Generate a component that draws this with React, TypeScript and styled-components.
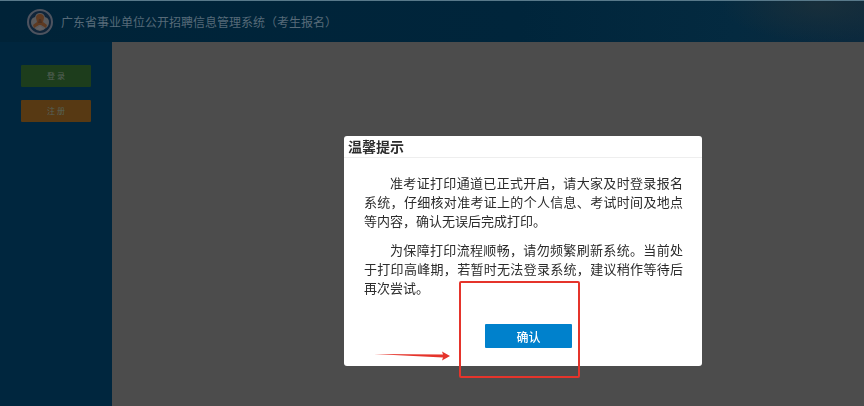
import React from "react";
import styled, { createGlobalStyle } from "styled-components";

const GlobalStyle = createGlobalStyle`
  * { box-sizing: border-box; }
  body {
    margin: 0;
    background: #4c4c4c;
    font-family: "Noto Sans CJK SC", "Noto Sans", sans-serif;
  }
  button { font-family: inherit; border: 0; padding: 0; cursor: pointer; }
`;

const Page = styled.div`
  min-height: 100vh;
  display: flex;
  flex-direction: column;
`;

const Header = styled.header`
  display: flex;
  align-items: center;
  gap: 8px;
  height: 42px;
  padding-left: 27px;
  border-top: 1px solid #58798a;
  background:
    radial-gradient(ellipse 100px 36px at 95% 10%, rgba(28, 48, 58, 0.8), transparent),
    linear-gradient(90deg, #002338 0%, #00253b 60%, #042a40 85%, #0c293d 100%);
`;

const SystemTitle = styled.h1`
  margin: 0;
  font-size: 12px;
  line-height: 18px;
  font-weight: 400;
  color: #566a78;
`;

const Main = styled.div`
  display: flex;
  flex: 1;
`;

const Sidebar = styled.nav`
  display: flex;
  flex-direction: column;
  gap: 13px;
  width: 112px;
  padding: 23px 21px;
  background: #00263e;
`;

const SideButton = styled.button<{ $color: string }>`
  height: 22px;
  border-radius: 1px;
  background: ${(p) => p.$color};
  color: #56625a;
  font-size: 8px;
  line-height: 10px;
`;

const Content = styled.main`
  flex: 1;
  background: #4c4c4c;
`;

const Overlay = styled.div`
  position: fixed;
  inset: 0;
  display: flex;
  justify-content: center;
  align-items: flex-start;
  padding: 136px 0 0 182px;
`;

const Dialog = styled.section`
  position: relative;
  width: 358px;
  border-radius: 3px;
  background: #fff;
  color: #2c2c2c;
`;

const DialogTitle = styled.h2`
  margin: 0;
  padding: 0 4px;
  border-bottom: 1px solid #eee;
  font-size: 14px;
  line-height: 21px;
  font-weight: 700;
`;

const DialogBody = styled.div`
  display: flex;
  flex-direction: column;
  gap: 10px;
  padding: 15px 19px 0 20px;
`;

const Paragraph = styled.p`
  margin: 0;
  font-size: 13px;
  line-height: 19px;
  text-indent: 2em;
  text-align: justify;
`;

const Actions = styled.div`
  display: flex;
  justify-content: center;
  padding: 27px 0 18px 11px;
`;

const ConfirmButton = styled.button`
  width: 87px;
  height: 24px;
  border-radius: 1px;
  background: #0081cc;
  color: #fff;
  font-size: 12px;
  font-weight: 500;
`;

const Highlight = styled.div`
  position: absolute;
  left: 115px;
  top: 145px;
  width: 121px;
  height: 97px;
  border: 2px solid #e5342b;
  border-radius: 2px;
  pointer-events: none;
`;

const Arrow = styled.svg`
  position: absolute;
  left: 30px;
  top: 214px;
  pointer-events: none;
`;

const Emblem = () => (
  <svg width="26" height="26" viewBox="0 0 26 26" aria-hidden="true">
    <circle cx="13" cy="13" r="12" fill="#10253a" stroke="#4d535f" strokeWidth="2" />
    <path
      d="M13 4 Q17 4 18 8 Q22 9 22 13 Q22 17 19 19 Q16 22 13 22 Q10 22 7 19 Q4 17 4 13 Q4 9 8 8 Q9 4 13 4Z"
      fill="#5a5a5c"
    />
    <path
      d="M9 9 Q9 5 13 5 Q17 5 17 9 L16 13 L20 16 L19 19 L14 16 L12 16 L7 19 L6 16 L10 13Z"
      fill="#5e3a22"
    />
    <path d="M12 10 L14 10 L15 14 L11 14Z" fill="#4a2f20" />
    <path d="M9 20 L13 17 L17 20 L13 21Z" fill="#626064" />
  </svg>
);

export default function App() {
  return (
    <Page lang="zh-CN">
      <GlobalStyle />
      <Header>
        <Emblem />
        <SystemTitle>广东省事业单位公开招聘信息管理系统（考生报名）</SystemTitle>
      </Header>
      <Main>
        <Sidebar>
          <SideButton $color="#1d3d1c">登 录</SideButton>
          <SideButton $color="#573913">注 册</SideButton>
        </Sidebar>
        <Content />
      </Main>
      <Overlay>
        <Dialog role="dialog" aria-modal="true" aria-labelledby="notice-title">
          <DialogTitle id="notice-title">温馨提示</DialogTitle>
          <DialogBody>
            <Paragraph>
              准考证打印通道已正式开启，请大家及时登录报名系统，仔细核对准考证上的个人信息、考试时间及地点等内容，确认无误后完成打印。
            </Paragraph>
            <Paragraph>
              为保障打印流程顺畅，请勿频繁刷新系统。当前处于打印高峰期，若暂时无法登录系统，建议稍作等待后再次尝试。
            </Paragraph>
          </DialogBody>
          <Actions>
            <ConfirmButton>确认</ConfirmButton>
          </Actions>
          <Highlight />
          <Arrow width="77" height="12" viewBox="0 0 77 12" aria-hidden="true">
            <path d="M0 4 L69 4.5 L68 1.5 L76 6 L68 10.5 L69 7.5 Z" fill="#e5342b" />
          </Arrow>
        </Dialog>
      </Overlay>
    </Page>
  );
}
